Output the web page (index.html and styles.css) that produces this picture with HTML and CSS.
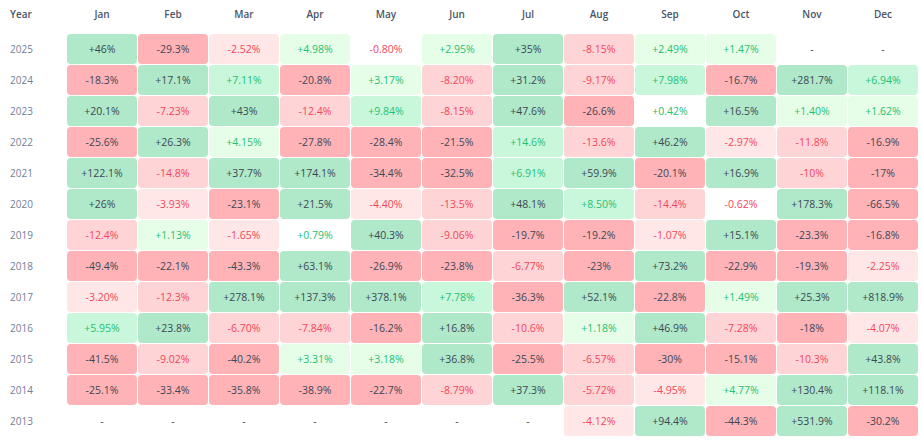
FILE: index.html
```html
<!DOCTYPE html>
<html lang="en">
<head>
<meta charset="utf-8">
<title>Monthly returns</title>
<link rel="stylesheet" href="styles.css">
</head>
<body>
<div class="heatmap">
  <div class="hd year-hd">Year</div>
  <div class="hd">Jan</div><div class="hd">Feb</div><div class="hd">Mar</div><div class="hd">Apr</div><div class="hd">May</div><div class="hd">Jun</div><div class="hd">Jul</div><div class="hd">Aug</div><div class="hd">Sep</div><div class="hd">Oct</div><div class="hd">Nov</div><div class="hd">Dec</div>

  <div class="yr">2025</div>
  <div class="c g3">+46%</div><div class="c r3">-29.3%</div><div class="c r1">-2.52%</div><div class="c g1">+4.98%</div><div class="c zn">-0.80%</div><div class="c g1">+2.95%</div><div class="c g3">+35%</div><div class="c r2">-8.15%</div><div class="c g1">+2.49%</div><div class="c g1">+1.47%</div><div class="c e">-</div><div class="c e">-</div>

  <div class="yr">2024</div>
  <div class="c r3">-18.3%</div><div class="c g3">+17.1%</div><div class="c g2">+7.11%</div><div class="c r3">-20.8%</div><div class="c g1">+3.17%</div><div class="c r2">-8.20%</div><div class="c g3">+31.2%</div><div class="c r2">-9.17%</div><div class="c g2">+7.98%</div><div class="c r3">-16.7%</div><div class="c g3">+281.7%</div><div class="c g2">+6.94%</div>

  <div class="yr">2023</div>
  <div class="c g3">+20.1%</div><div class="c r2">-7.23%</div><div class="c g3">+43%</div><div class="c r2">-12.4%</div><div class="c g2">+9.84%</div><div class="c r2">-8.15%</div><div class="c g3">+47.6%</div><div class="c r3">-26.6%</div><div class="c zp">+0.42%</div><div class="c g3">+16.5%</div><div class="c g1">+1.40%</div><div class="c g1">+1.62%</div>

  <div class="yr">2022</div>
  <div class="c r3">-25.6%</div><div class="c g3">+26.3%</div><div class="c g1">+4.15%</div><div class="c r3">-27.8%</div><div class="c r3">-28.4%</div><div class="c r3">-21.5%</div><div class="c g2">+14.6%</div><div class="c r2">-13.6%</div><div class="c g3">+46.2%</div><div class="c r1">-2.97%</div><div class="c r2">-11.8%</div><div class="c r3">-16.9%</div>

  <div class="yr">2021</div>
  <div class="c g3">+122.1%</div><div class="c r2">-14.8%</div><div class="c g3">+37.7%</div><div class="c g3">+174.1%</div><div class="c r3">-34.4%</div><div class="c r3">-32.5%</div><div class="c g2">+6.91%</div><div class="c g3">+59.9%</div><div class="c r3">-20.1%</div><div class="c g3">+16.9%</div><div class="c r2">-10%</div><div class="c r3">-17%</div>

  <div class="yr">2020</div>
  <div class="c g3">+26%</div><div class="c r1">-3.93%</div><div class="c r3">-23.1%</div><div class="c g3">+21.5%</div><div class="c r1">-4.40%</div><div class="c r2">-13.5%</div><div class="c g3">+48.1%</div><div class="c g2">+8.50%</div><div class="c r2">-14.4%</div><div class="c zn">-0.62%</div><div class="c g3">+178.3%</div><div class="c r3">-66.5%</div>

  <div class="yr">2019</div>
  <div class="c r2">-12.4%</div><div class="c g1">+1.13%</div><div class="c r1">-1.65%</div><div class="c zp">+0.79%</div><div class="c g3">+40.3%</div><div class="c r2">-9.06%</div><div class="c r3">-19.7%</div><div class="c r3">-19.2%</div><div class="c r1">-1.07%</div><div class="c g3">+15.1%</div><div class="c r3">-23.3%</div><div class="c r3">-16.8%</div>

  <div class="yr">2018</div>
  <div class="c r3">-49.4%</div><div class="c r3">-22.1%</div><div class="c r3">-43.3%</div><div class="c g3">+63.1%</div><div class="c r3">-26.9%</div><div class="c r3">-23.8%</div><div class="c r2">-6.77%</div><div class="c r3">-23%</div><div class="c g3">+73.2%</div><div class="c r3">-22.9%</div><div class="c r3">-19.3%</div><div class="c r1">-2.25%</div>

  <div class="yr">2017</div>
  <div class="c r1">-3.20%</div><div class="c r2">-12.3%</div><div class="c g3">+278.1%</div><div class="c g3">+137.3%</div><div class="c g3">+378.1%</div><div class="c g2">+7.78%</div><div class="c r3">-36.3%</div><div class="c g3">+52.1%</div><div class="c r3">-22.8%</div><div class="c g1">+1.49%</div><div class="c g3">+25.3%</div><div class="c g3">+818.9%</div>

  <div class="yr">2016</div>
  <div class="c g2">+5.95%</div><div class="c g3">+23.8%</div><div class="c r2">-6.70%</div><div class="c r2">-7.84%</div><div class="c r3">-16.2%</div><div class="c g3">+16.8%</div><div class="c r2">-10.6%</div><div class="c g1">+1.18%</div><div class="c g3">+46.9%</div><div class="c r2">-7.28%</div><div class="c r3">-18%</div><div class="c r1">-4.07%</div>

  <div class="yr">2015</div>
  <div class="c r3">-41.5%</div><div class="c r2">-9.02%</div><div class="c r3">-40.2%</div><div class="c g1">+3.31%</div><div class="c g1">+3.18%</div><div class="c g3">+36.8%</div><div class="c r3">-25.5%</div><div class="c r2">-6.57%</div><div class="c r3">-30%</div><div class="c r3">-15.1%</div><div class="c r2">-10.3%</div><div class="c g3">+43.8%</div>

  <div class="yr">2014</div>
  <div class="c r3">-25.1%</div><div class="c r3">-33.4%</div><div class="c r3">-35.8%</div><div class="c r3">-38.9%</div><div class="c r3">-22.7%</div><div class="c r2">-8.79%</div><div class="c g3">+37.3%</div><div class="c r2">-5.72%</div><div class="c r1">-4.95%</div><div class="c g1">+4.77%</div><div class="c g3">+130.4%</div><div class="c g3">+118.1%</div>

  <div class="yr">2013</div>
  <div class="c e">-</div><div class="c e">-</div><div class="c e">-</div><div class="c e">-</div><div class="c e">-</div><div class="c e">-</div><div class="c e">-</div><div class="c r1">-4.12%</div><div class="c g3">+94.4%</div><div class="c r3">-44.3%</div><div class="c g3">+531.9%</div><div class="c r3">-30.2%</div>
</div>
</body>
</html>
```

FILE: styles.css
```css
* { box-sizing: border-box; }

html, body {
  margin: 0;
  padding: 0;
  background: #ffffff;
}

body {
  font-family: "Open Sans", "Liberation Sans", sans-serif;
}

.heatmap {
  display: grid;
  grid-template-columns: 66px repeat(12, 70px);
  grid-template-rows: 33px;
  grid-auto-rows: 30px;
  column-gap: 1px;
  row-gap: 1px;
}

.hd {
  font-size: 10px;
  font-weight: 600;
  color: #4a5568;
  text-align: center;
  line-height: 14px;
  padding-top: 7px;
}

.year-hd {
  text-align: left;
  padding-left: 10px;
}

.yr {
  font-size: 10px;
  color: #718096;
  padding-left: 10px;
  display: flex;
  align-items: center;
}

.c {
  display: flex;
  align-items: center;
  justify-content: center;
  font-size: 10.5px;
  border-radius: 4px;
  color: #3d4756;
}

.g3 { background: #afe9c9; color: #3d4756; }
.g2 { background: #c9f7dc; color: #1fc173; }
.g1 { background: #e6fde8; color: #1fc173; }
.r3 { background: #ffb3b7; color: #3d4756; }
.r2 { background: #ffd4d6; color: #f4455a; }
.r1 { background: #ffe7e7; color: #f4455a; }
.zp { background: #ffffff; color: #1fc173; }
.zn { background: #ffffff; color: #f4455a; }
.e  { background: #ffffff; color: #3d4756; }
```
